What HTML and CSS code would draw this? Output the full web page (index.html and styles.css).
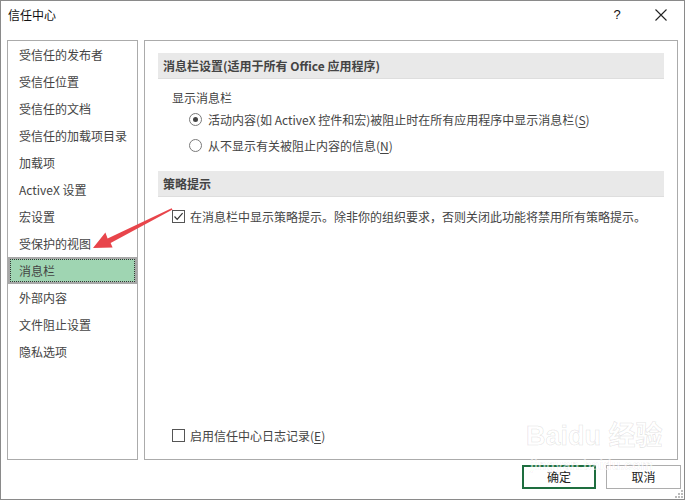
FILE: index.html
```html
<!DOCTYPE html>
<html lang="zh-CN">
<head>
<meta charset="utf-8">
<title>信任中心</title>
<link rel="stylesheet" href="styles.css">
</head>
<body>
<div class="window">
  <div class="titlebar">
    <span class="title">信任中心</span>
    <span class="tb-btn help">?</span>
    <span class="tb-btn close">
      <svg width="12" height="12" viewBox="0 0 12 12"><path d="M0.5 0.5 L11.5 11.5 M11.5 0.5 L0.5 11.5" stroke="#222" stroke-width="1.1" fill="none"/></svg>
    </span>
  </div>
  <div class="main">
    <ul class="nav">
      <li>受信任的发布者</li>
      <li>受信任位置</li>
      <li>受信任的文档</li>
      <li>受信任的加载项目录</li>
      <li>加载项</li>
      <li>ActiveX 设置</li>
      <li>宏设置</li>
      <li>受保护的视图</li>
      <li class="selected">消息栏</li>
      <li>外部内容</li>
      <li>文件阻止设置</li>
      <li>隐私选项</li>
    </ul>
    <div class="panel">
      <div class="section-head">消息栏设置(适用于所有 Office 应用程序)</div>
      <div class="label">显示消息栏</div>
      <div class="radio-row first">
        <span class="radio checked"></span>
        <span>活动内容(如 ActiveX 控件和宏)被阻止时在所有应用程序中显示消息栏(<u>S</u>)</span>
      </div>
      <div class="radio-row">
        <span class="radio"></span>
        <span>从不显示有关被阻止内容的信息(<u>N</u>)</span>
      </div>
      <div class="section-head second">策略提示</div>
      <div class="check-row">
        <span class="checkbox">
          <svg width="11" height="11" viewBox="0 0 11 11"><path d="M1.5 5.5 L4.2 8.3 L9.6 2.2" stroke="#333" stroke-width="1.2" fill="none"/></svg>
        </span>
        <span>在消息栏中显示策略提示。除非你的组织要求，否则关闭此功能将禁用所有策略提示。</span>
      </div>
      <div class="check-row bottom">
        <span class="checkbox"></span>
        <span>启用信任中心日志记录(<u>E</u>)</span>
      </div>
    </div>
  </div>
  <div class="footer">
    <span class="btn ok">确定</span>
    <span class="btn">取消</span>
  </div>
  <svg class="grip" width="8" height="8" viewBox="0 0 8 8">
    <rect x="6" y="0" width="2" height="2" fill="#bbb"/>
    <rect x="3" y="3" width="2" height="2" fill="#bbb"/>
    <rect x="6" y="3" width="2" height="2" fill="#bbb"/>
    <rect x="0" y="6" width="2" height="2" fill="#bbb"/>
    <rect x="3" y="6" width="2" height="2" fill="#bbb"/>
    <rect x="6" y="6" width="2" height="2" fill="#bbb"/>
  </svg>
  <div class="watermark">
    <div class="wm-big">Bai<span class="wm-du">du</span> 经验</div>
    <div class="wm-small">jingyan.baidu.com</div>
  </div>
  <svg class="arrow" width="685" height="500" viewBox="0 0 685 500">
    <polygon points="172.6,209.6 110.6,243 112.6,247.4 93,248 105.4,232.6 107.6,238.4 171.6,208.2" fill="#e8454b"/>
  </svg>
</div>
</body>
</html>
```
FILE: styles.css
```css
* { box-sizing: border-box; }
html, body { margin: 0; padding: 0; background: #fff; }
body {
  font-family: "Noto Sans CJK SC", "Noto Sans", "Liberation Sans", sans-serif;
  font-size: 12px;
  color: #444;
}
.window {
  position: relative;
  width: 685px;
  height: 500px;
  border: 1px solid #8a8a8a;
  display: flex;
  flex-direction: column;
  overflow: hidden;
}
.titlebar {
  height: 39px;
  display: flex;
  align-items: flex-start;
  padding: 5px 0 0 7px;
  color: #111;
}
.title { flex: 1; line-height: 18px; font-size: 12px; }
.tb-btn { line-height: 18px; text-align: center; }
.help { width: 14px; font-size: 13px; margin-right: 31px; font-family: "Liberation Sans", sans-serif; }
.close { width: 12px; margin-right: 17px; padding-top: 3px; line-height: 12px; }
.main {
  display: flex;
  gap: 6px;
  padding: 0 6px 0 6px;
  height: 420px;
}
.nav {
  list-style: none;
  margin: 0;
  padding: 0;
  width: 131px;
  border: 1px solid #ababab;
}
.nav li {
  height: 27px;
  line-height: 27px;
  padding-left: 11px;
  white-space: nowrap;
}
.nav li.selected {
  background: #9fd5b2;
  box-shadow: inset 0 0 0 2px #a8a8a8, inset 0 0 0 3px #9fd5b2;
  outline: 1px dotted #333;
  outline-offset: -3px;
}
.panel {
  flex: 1;
  border: 1px solid #ababab;
  padding: 12px 13px 14px 13px;
  display: flex;
  flex-direction: column;
}
.section-head {
  height: 26px;
  line-height: 25px;
  background: #e9e9e9;
  border-bottom: 1px solid #dedede;
  padding-left: 5px;
  font-weight: bold;
  color: #444;
}
.section-head.second { margin-top: 16px; }
.label {
  margin-top: 9px;
  line-height: 20px;
  padding-left: 14px;
}
.radio-row {
  display: flex;
  align-items: center;
  height: 20px;
  padding-left: 31px;
  margin-top: 6px;
  gap: 6px;
}
.radio-row.first { margin-top: 1px; }
.radio {
  width: 13px;
  height: 13px;
  border: 1px solid #7a7a7a;
  border-radius: 50%;
  display: flex;
  align-items: center;
  justify-content: center;
  flex: none;
}
.radio.checked::after {
  content: "";
  width: 5px;
  height: 5px;
  border-radius: 50%;
  background: #444;
}
.check-row {
  display: flex;
  align-items: center;
  height: 20px;
  margin-top: 9px;
  padding-left: 14px;
  gap: 5px;
}
.check-row.bottom { margin-top: auto; }
.checkbox {
  width: 13px;
  height: 13px;
  border: 1px solid #555;
  flex: none;
  display: flex;
  align-items: center;
  justify-content: center;
}
u { text-decoration: underline; text-underline-offset: 2px; }
.footer {
  display: flex;
  justify-content: flex-end;
  gap: 10px;
  padding: 5px 3px 0 0;
}
.btn {
  width: 75px;
  height: 24px;
  line-height: 22px;
  text-align: center;
  border: 1px solid #adadad;
  color: #222;
}
.btn.ok {
  width: 74px;
  border: 2px solid #1e6e3f;
  line-height: 20px;
}
.grip { position: absolute; right: 1px; bottom: 1px; }
.arrow { position: absolute; left: -1px; top: -1px; pointer-events: none; }
.watermark {
  position: absolute;
  left: 525px;
  top: 420px;
  color: rgba(255,255,255,0.6);
  -webkit-text-stroke: 1px rgba(0,0,0,0.09);
  pointer-events: none;
}
.wm-big { font-family: "Liberation Sans", "Noto Sans CJK SC", sans-serif; font-size: 27px; font-weight: bold; line-height: 30px; }
.wm-small { font-family: "Liberation Sans", sans-serif; font-size: 14px; font-weight: bold; margin-left: 4px; margin-top: 6px; -webkit-text-stroke: 0.6px rgba(0,0,0,0.08); }
```
